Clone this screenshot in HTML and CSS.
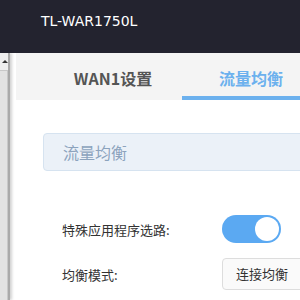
FILE: index.html
```html
<!DOCTYPE html>
<html lang="zh-CN">
<head>
  <meta charset="UTF-8">
  <meta name="viewport" content="width=device-width, initial-scale=1.0">
  <title>TL-WAR1750L</title>
  <link rel="stylesheet" href="styles.css">
</head>
<body>

  <header class="topbar">TL-WAR1750L</header>

  <div class="main">
    <div class="scrollbar">
      <div class="scroll-arrow"></div>
      <div class="scroll-thumb"></div>
    </div>

    <div class="content">
      <nav class="tabs">
        <div class="tab">WAN1设置</div>
        <div class="tab active">流量均衡</div>
      </nav>

      <div class="panel">
        <div class="panel-title">流量均衡</div>

        <div class="form-row">
          <label class="form-label">特殊应用程序选路:</label>
          <div class="switch on"><span class="knob"></span></div>
        </div>
        <div class="form-row">
          <label class="form-label">均衡模式:</label>
          <div class="select">连接均衡</div>
        </div>
      </div>
    </div>
  </div>

</body>
</html>
```

FILE: styles.css
```css
body {
  margin: 0;
  font-family: 'Noto Sans CJK SC', 'Noto Sans', sans-serif;
  background-color: #ffffff;
  overflow: hidden;
}
.topbar {
  height: 53px;
  box-sizing: border-box;
  padding: 12px 0 0 41px;
  background-color: #23232f;
  color: #ffffff;
  font-family: 'DejaVu Sans', sans-serif;
  font-size: 14px;
  line-height: 18px;
}
.main {
  display: flex;
  height: 247px;
}
.scrollbar {
  width: 10px;
  flex-shrink: 0;
  background-color: #eeeeee;
  border-right: 2px solid #a9a9a9;
  box-shadow: 2px 0 3px rgba(0,0,0,0.18);
  padding-top: 7px;
  box-sizing: border-box;
}
.scroll-arrow {
  width: 0;
  height: 0;
  margin-left: 2px;
  border-left: 3px solid transparent;
  border-right: 3px solid transparent;
  border-bottom: 3px solid #333333;
}
.scroll-thumb {
  margin-top: 7px;
  height: 240px;
  background-color: #e2e2e2;
  border-top: 1px solid #c8c8c8;
  border-right: 1px solid #c8c8c8;
}
.content {
  flex: 1;
  min-width: 0;
  margin-left: 6px;
  overflow: hidden;
}
.tabs {
  display: flex;
  padding-left: 28px;
  background-color: #f4f4f4;
}
.tab {
  width: 138px;
  flex-shrink: 0;
  padding: 14px 0 7px;
  text-align: center;
  font-size: 16px;
  line-height: 22px;
  font-weight: bold;
  color: #555555;
  border-bottom: 4px solid transparent;
}
.tab.active {
  color: #6cb1ee;
  border-bottom-color: #6cb1ee;
}
.panel {
  padding: 33px 0 0 27px;
  background-color: #ffffff;
}
.panel-title {
  height: 36px;
  margin: 0 -20px 44px 0;
  padding-left: 19px;
  background-color: #ebf1f8;
  border: 1px solid #d6e3f0;
  border-radius: 4px;
  color: #8ca3bd;
  font-size: 16px;
  line-height: 36px;
}
.form-row {
  display: flex;
  align-items: center;
  padding-left: 19px;
}
.form-row + .form-row {
  margin-top: 15px;
}
.form-label {
  width: 160px;
  flex-shrink: 0;
  font-size: 13px;
  color: #333333;
}
.switch {
  position: relative;
  width: 59px;
  height: 28px;
  border-radius: 14px;
  background-color: #5ba9f2;
}
.switch .knob {
  position: absolute;
  top: 2px;
  right: 2px;
  width: 24px;
  height: 24px;
  border-radius: 50%;
  background-color: #ffffff;
}
.select {
  width: 140px;
  flex-shrink: 0;
  height: 30px;
  padding-left: 13px;
  border: 1px solid #dddddd;
  border-radius: 4px;
  background-color: #fafafa;
  font-size: 13px;
  line-height: 30px;
  color: #333333;
}
```
